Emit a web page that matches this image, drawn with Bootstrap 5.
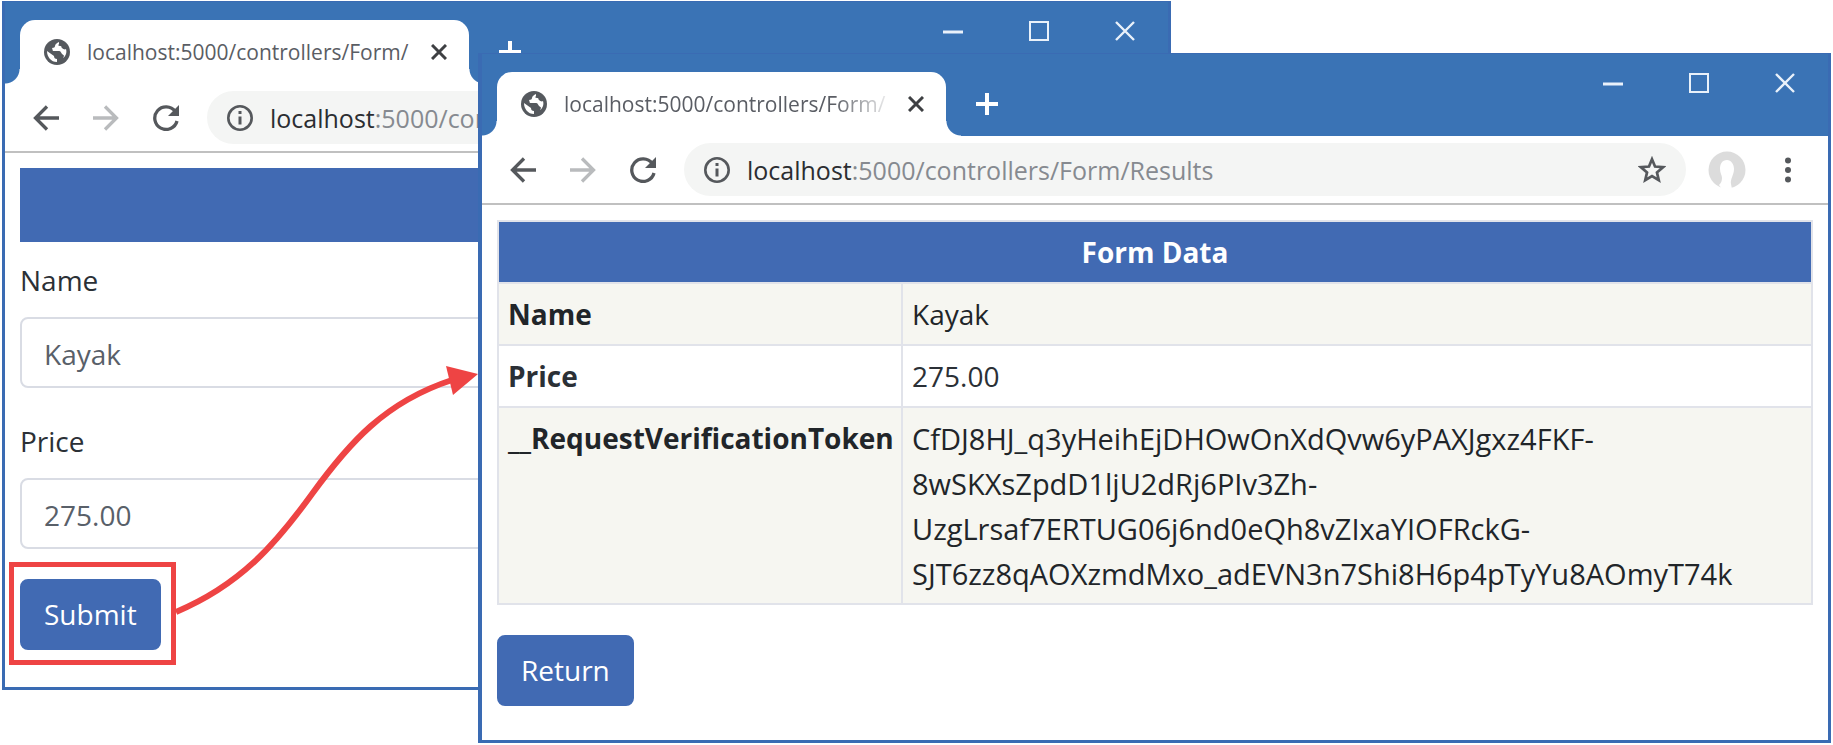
<!DOCTYPE html>
<html lang="en">
<head>
<meta charset="utf-8">
<meta name="viewport" content="width=device-width, initial-scale=1">
<title>Form Data</title>
<link href="https://cdn.jsdelivr.net/npm/bootstrap@5.3.0/dist/css/bootstrap.min.css" rel="stylesheet">
<style>
  :root { --frame: #3a6bb3; --title: #3a73b5; --brand: #416ab3; --mark: #ee4444; }
  body { font-family: "Open Sans", "Noto Sans", sans-serif; font-size: 28px; line-height: 45px; color: #2b3036; background: #fff; }
  .desktop { min-height: 100vh; overflow: hidden; }
  .win { position: absolute; background: #fff; border: 3px solid var(--frame); border-top-width: 1px; }
  .win-form { left: 2px; right: 36.1%; top: 1px; }
  .win-result { left: 478px; right: 2px; top: 53px; border-left-width: 4px; }
  .titlebar { background: var(--title); height: 82px; padding: 18px 33px 0 15px; }
  .tab { position: relative; width: 449px; height: 64px; padding: 0 22px 0 24px; background: #fff; border-radius: 15px 15px 0 0; font-size: 21px; line-height: 28px; color: #5a5d64; }
  .tab::before, .tab::after { content: ""; position: absolute; bottom: 0; width: 15px; height: 15px; }
  .tab::before { right: 100%; background: radial-gradient(circle at 0 0, var(--title) 14px, #fff 15px); }
  .tab::after { left: 100%; background: radial-gradient(circle at 100% 0, var(--title) 14px, #fff 15px); }
  .tab-title { margin-left: 17px; }
  .fade-end { -webkit-mask-image: linear-gradient(to right, #000 270px, transparent 330px); mask-image: linear-gradient(to right, #000 270px, transparent 330px); }
  .bare { border: 0; padding: 0; background: none; display: flex; color: inherit; }
  .tab .bare { color: #3e4043; }
  .plus { margin: 21px 0 0 30px; color: #fff; }
  .controls { gap: 66px; color: #e9f1fa; height: 20px; margin-top: 1px; }
  .toolbar { height: 69px; padding: 0 37px 0 28px; border-bottom: 2px solid #c0c0c0; color: #55585c; }
  .nav-icons { gap: 34px; margin-right: 28px; }
  .pill { height: 53px; border-radius: 27px; background: #f4f5f4; padding: 0 20px; font-size: 25px; line-height: 34px; color: #868a90; }
  .address { margin-left: 17px; }
  .host { color: #2b2d31; }
  .profile { margin: 0 39px 0 22px; }
  .pagebody { padding: 15px 15px 37px; }
  .win-result .pagebody { padding: 15px 15px 34px; }
  .banner { height: 74px; background: var(--brand); margin-bottom: 16px; }
  .form-label { margin-bottom: 14px; }
  .form-control { font-size: 28px; line-height: 45px; padding: 13px 22px 9px; border: 2px solid #d9dce4; border-radius: 8px; color: #596069; }
  .field { margin-bottom: 30px; }
  .field + .field { margin-top: 31px; }
  .btn-brand { --bs-btn-color: #fff; --bs-btn-bg: var(--brand); --bs-btn-border-color: var(--brand); --bs-btn-hover-color: #fff; --bs-btn-hover-bg: #365a9a; font-size: 28px; line-height: 45px; padding: 11px 22px; border-width: 2px; border-radius: 8px; }
  .marked { position: relative; }
  .marked::after { content: ""; position: absolute; inset: -17px -15px -15px -11px; border: 5px solid var(--mark); pointer-events: none; }
  .flow-arrow { position: absolute; left: 170px; top: 360px; pointer-events: none; }
  .data-table { margin-bottom: 30px; --bs-table-striped-bg: #f6f6f1; border-color: #e1e3ea; color: #2b3036; }
  .data-table > :not(caption) > * > * { padding: 8px 9px 7px; border-width: 2px; }
  .data-table thead th { background: var(--brand); color: #fff; text-align: center; }
  .data-table tbody th { width: 404px; padding-right: 6px; white-space: nowrap; }
  .token { font-size: 29px; }
</style>
</head>
<body>
<svg class="d-none" aria-hidden="true">
  <symbol id="globe" viewBox="0 0 26 26"><circle cx="13" cy="13" r="13" fill="#55595e"/><path fill="#fff" d="M15 3c-2 1-4 2-4 4 0 1-1 2-3 2 1 2 0 3 2 3h5c2 0 2 2 3 3s2 1 2 2l-1 2c3-2 4-6 3-9-1 1-3 0-4-1s0-2-2-2-2-1-1-2zM3 12c0 6 4 11 10 11v-3c-2 0-3-1-3-3z"/></symbol>
  <symbol id="cross" viewBox="0 0 16 16"><path d="M1 1l14 14M15 1L1 15" stroke="currentColor" stroke-width="3" fill="none"/></symbol>
  <symbol id="plus" viewBox="0 0 22 22"><path d="M11 0v22M0 11h22" stroke="currentColor" stroke-width="4" fill="none"/></symbol>
  <symbol id="min" viewBox="0 0 20 20"><path d="M0 11h20" stroke="currentColor" stroke-width="3"/></symbol>
  <symbol id="max" viewBox="0 0 20 20"><path d="M1 1h18v18H1z" stroke="currentColor" stroke-width="2" fill="none"/></symbol>
  <symbol id="close" viewBox="0 0 20 20"><path d="M1 1l18 18M19 1L1 19" stroke="currentColor" stroke-width="2.4" fill="none"/></symbol>
  <symbol id="back" viewBox="0 0 26 26"><path d="M26 13H3M14 1.500L2.500 13 14 24.500" stroke="currentColor" stroke-width="3.300" fill="none"/></symbol>
  <symbol id="reload" viewBox="0 0 26 26"><path d="M22.200 6.500A11.300 11.300 0 1 0 24 16" stroke="currentColor" stroke-width="3.300" fill="none"/><path d="M26 0v11H15z" fill="currentColor"/></symbol>
  <symbol id="info" viewBox="0 0 26 26"><circle cx="13" cy="13" r="11.700" stroke="currentColor" stroke-width="2.600" fill="none"/><path d="M13 11.500v8M13 6v3" stroke="currentColor" stroke-width="3"/></symbol>
  <symbol id="star" viewBox="0 0 26 26"><path d="M13 3l2.800 6.800 7.400.600-5.600 4.800 1.700 7.200-6.300-3.800-6.300 3.800 1.700-7.200L2.800 10.400l7.400-.600z" stroke="currentColor" stroke-width="2.500" fill="none"/></symbol>
  <symbol id="user" viewBox="0 0 38 38"><circle cx="19" cy="19" r="18.500" fill="#dcdcdc"/><path fill="#fff" d="M19 9c-5 0-7 4-7 9 0 4 2 6 2 9 0 3-1 5-3 7l3 4h10l-1-5c-1-5 3-9 3-15 0-5-3-9-7-9z"/></symbol>
  <symbol id="dots" viewBox="0 0 6 26"><g fill="currentColor"><circle cx="3" cy="3.500" r="3"/><circle cx="3" cy="13" r="3"/><circle cx="3" cy="22.500" r="3"/></g></symbol>
</svg>

<div class="desktop position-relative">

  <section class="win win-form" aria-label="Form window">
    <header class="titlebar d-flex align-items-start">
      <div class="tab d-flex align-items-center">
        <svg width="26" height="26"><use href="#globe"/></svg>
        <span class="tab-title flex-grow-1 text-nowrap overflow-hidden">localhost:5000/controllers/Form/</span>
        <button class="bare" aria-label="Close tab"><svg width="16" height="16"><use href="#cross"/></svg></button>
      </div>
      <button class="bare plus" aria-label="New tab"><svg width="22" height="22"><use href="#plus"/></svg></button>
      <div class="controls d-flex ms-auto">
        <button class="bare" aria-label="Minimize"><svg width="20" height="20"><use href="#min"/></svg></button>
        <button class="bare" aria-label="Maximize"><svg width="20" height="20"><use href="#max"/></svg></button>
        <button class="bare" aria-label="Close"><svg width="20" height="20"><use href="#close"/></svg></button>
      </div>
    </header>
    <nav class="toolbar d-flex align-items-center">
      <div class="nav-icons d-flex">
        <button class="bare" aria-label="Back"><svg width="26" height="26"><use href="#back"/></svg></button>
        <button class="bare" aria-label="Forward"><svg width="26" height="26" color="#b9bbbd"><use href="#back" transform="rotate(180 13 13)"/></svg></button>
        <button class="bare" aria-label="Reload"><svg width="26" height="26"><use href="#reload"/></svg></button>
      </div>
      <div class="pill flex-grow-1 d-flex align-items-center">
        <svg width="26" height="26" color="#55585c"><use href="#info"/></svg>
        <span class="address text-nowrap"><span class="host">localhost</span>:5000/con</span>
      </div>
    </nav>
    <main class="pagebody">
      <div class="banner"></div>
      <form>
        <div class="field">
          <label class="form-label d-block" for="name">Name</label>
          <input class="form-control" id="name" value="Kayak">
        </div>
        <div class="field">
          <label class="form-label d-block" for="price">Price</label>
          <input class="form-control" id="price" value="275.00">
        </div>
        <span class="marked d-inline-flex"><button type="button" class="btn btn-brand">Submit</button></span>
      </form>
    </main>
  </section>

  <section class="win win-result" aria-label="Results window">
    <header class="titlebar d-flex align-items-start">
      <div class="tab d-flex align-items-center">
        <svg width="26" height="26"><use href="#globe"/></svg>
        <span class="tab-title flex-grow-1 text-nowrap overflow-hidden fade-end">localhost:5000/controllers/Form/</span>
        <button class="bare" aria-label="Close tab"><svg width="16" height="16"><use href="#cross"/></svg></button>
      </div>
      <button class="bare plus" aria-label="New tab"><svg width="22" height="22"><use href="#plus"/></svg></button>
      <div class="controls d-flex ms-auto">
        <button class="bare" aria-label="Minimize"><svg width="20" height="20"><use href="#min"/></svg></button>
        <button class="bare" aria-label="Maximize"><svg width="20" height="20"><use href="#max"/></svg></button>
        <button class="bare" aria-label="Close"><svg width="20" height="20"><use href="#close"/></svg></button>
      </div>
    </header>
    <nav class="toolbar d-flex align-items-center">
      <div class="nav-icons d-flex">
        <button class="bare" aria-label="Back"><svg width="26" height="26"><use href="#back"/></svg></button>
        <button class="bare" aria-label="Forward"><svg width="26" height="26" color="#b9bbbd"><use href="#back" transform="rotate(180 13 13)"/></svg></button>
        <button class="bare" aria-label="Reload"><svg width="26" height="26"><use href="#reload"/></svg></button>
      </div>
      <div class="pill flex-grow-1 d-flex align-items-center">
        <svg width="26" height="26" color="#55585c"><use href="#info"/></svg>
        <span class="address text-nowrap"><span class="host">localhost</span>:5000/controllers/Form/Results</span>
        <button class="bare ms-auto" aria-label="Bookmark"><svg width="28" height="28" color="#55585c"><use href="#star"/></svg></button>
      </div>
      <button class="bare profile" aria-label="Profile"><svg width="38" height="38"><use href="#user"/></svg></button>
      <button class="bare" aria-label="Menu"><svg width="6" height="26"><use href="#dots"/></svg></button>
    </nav>
    <main class="pagebody">
      <table class="table table-bordered table-striped data-table">
        <thead><tr><th colspan="2">Form Data</th></tr></thead>
        <tbody>
          <tr><th scope="row">Name</th><td>Kayak</td></tr>
          <tr><th scope="row">Price</th><td>275.00</td></tr>
          <tr><th scope="row">__RequestVerificationToken</th><td class="token">CfDJ8HJ_q3yHeihEjDHOwOnXdQvw6yPAXJgxz4FKF-<br>8wSKXsZpdD1ljU2dRj6PIv3Zh-<br>UzgLrsaf7ERTUG06j6nd0eQh8vZIxaYIOFRckG-<br>SJT6zz8qAOXzmdMxo_adEVN3n7Shi8H6p4pTyYu8AOmyT74k</td></tr>
        </tbody>
      </table>
      <a class="btn btn-brand" href="#">Return</a>
    </main>
  </section>

  <svg class="flow-arrow" width="310" height="260" viewBox="170 360 310 260" aria-hidden="true">
    <path d="M176 612C240 585 275 545 312 494S385 402 452 380" fill="none" stroke="#ee4444" stroke-width="6"/>
    <path d="M446 366l32 8-25 21z" fill="#ee4444"/>
  </svg>
</div>
<script src="https://cdn.jsdelivr.net/npm/bootstrap@5.3.0/dist/js/bootstrap.bundle.min.js"></script>
</body>
</html>
